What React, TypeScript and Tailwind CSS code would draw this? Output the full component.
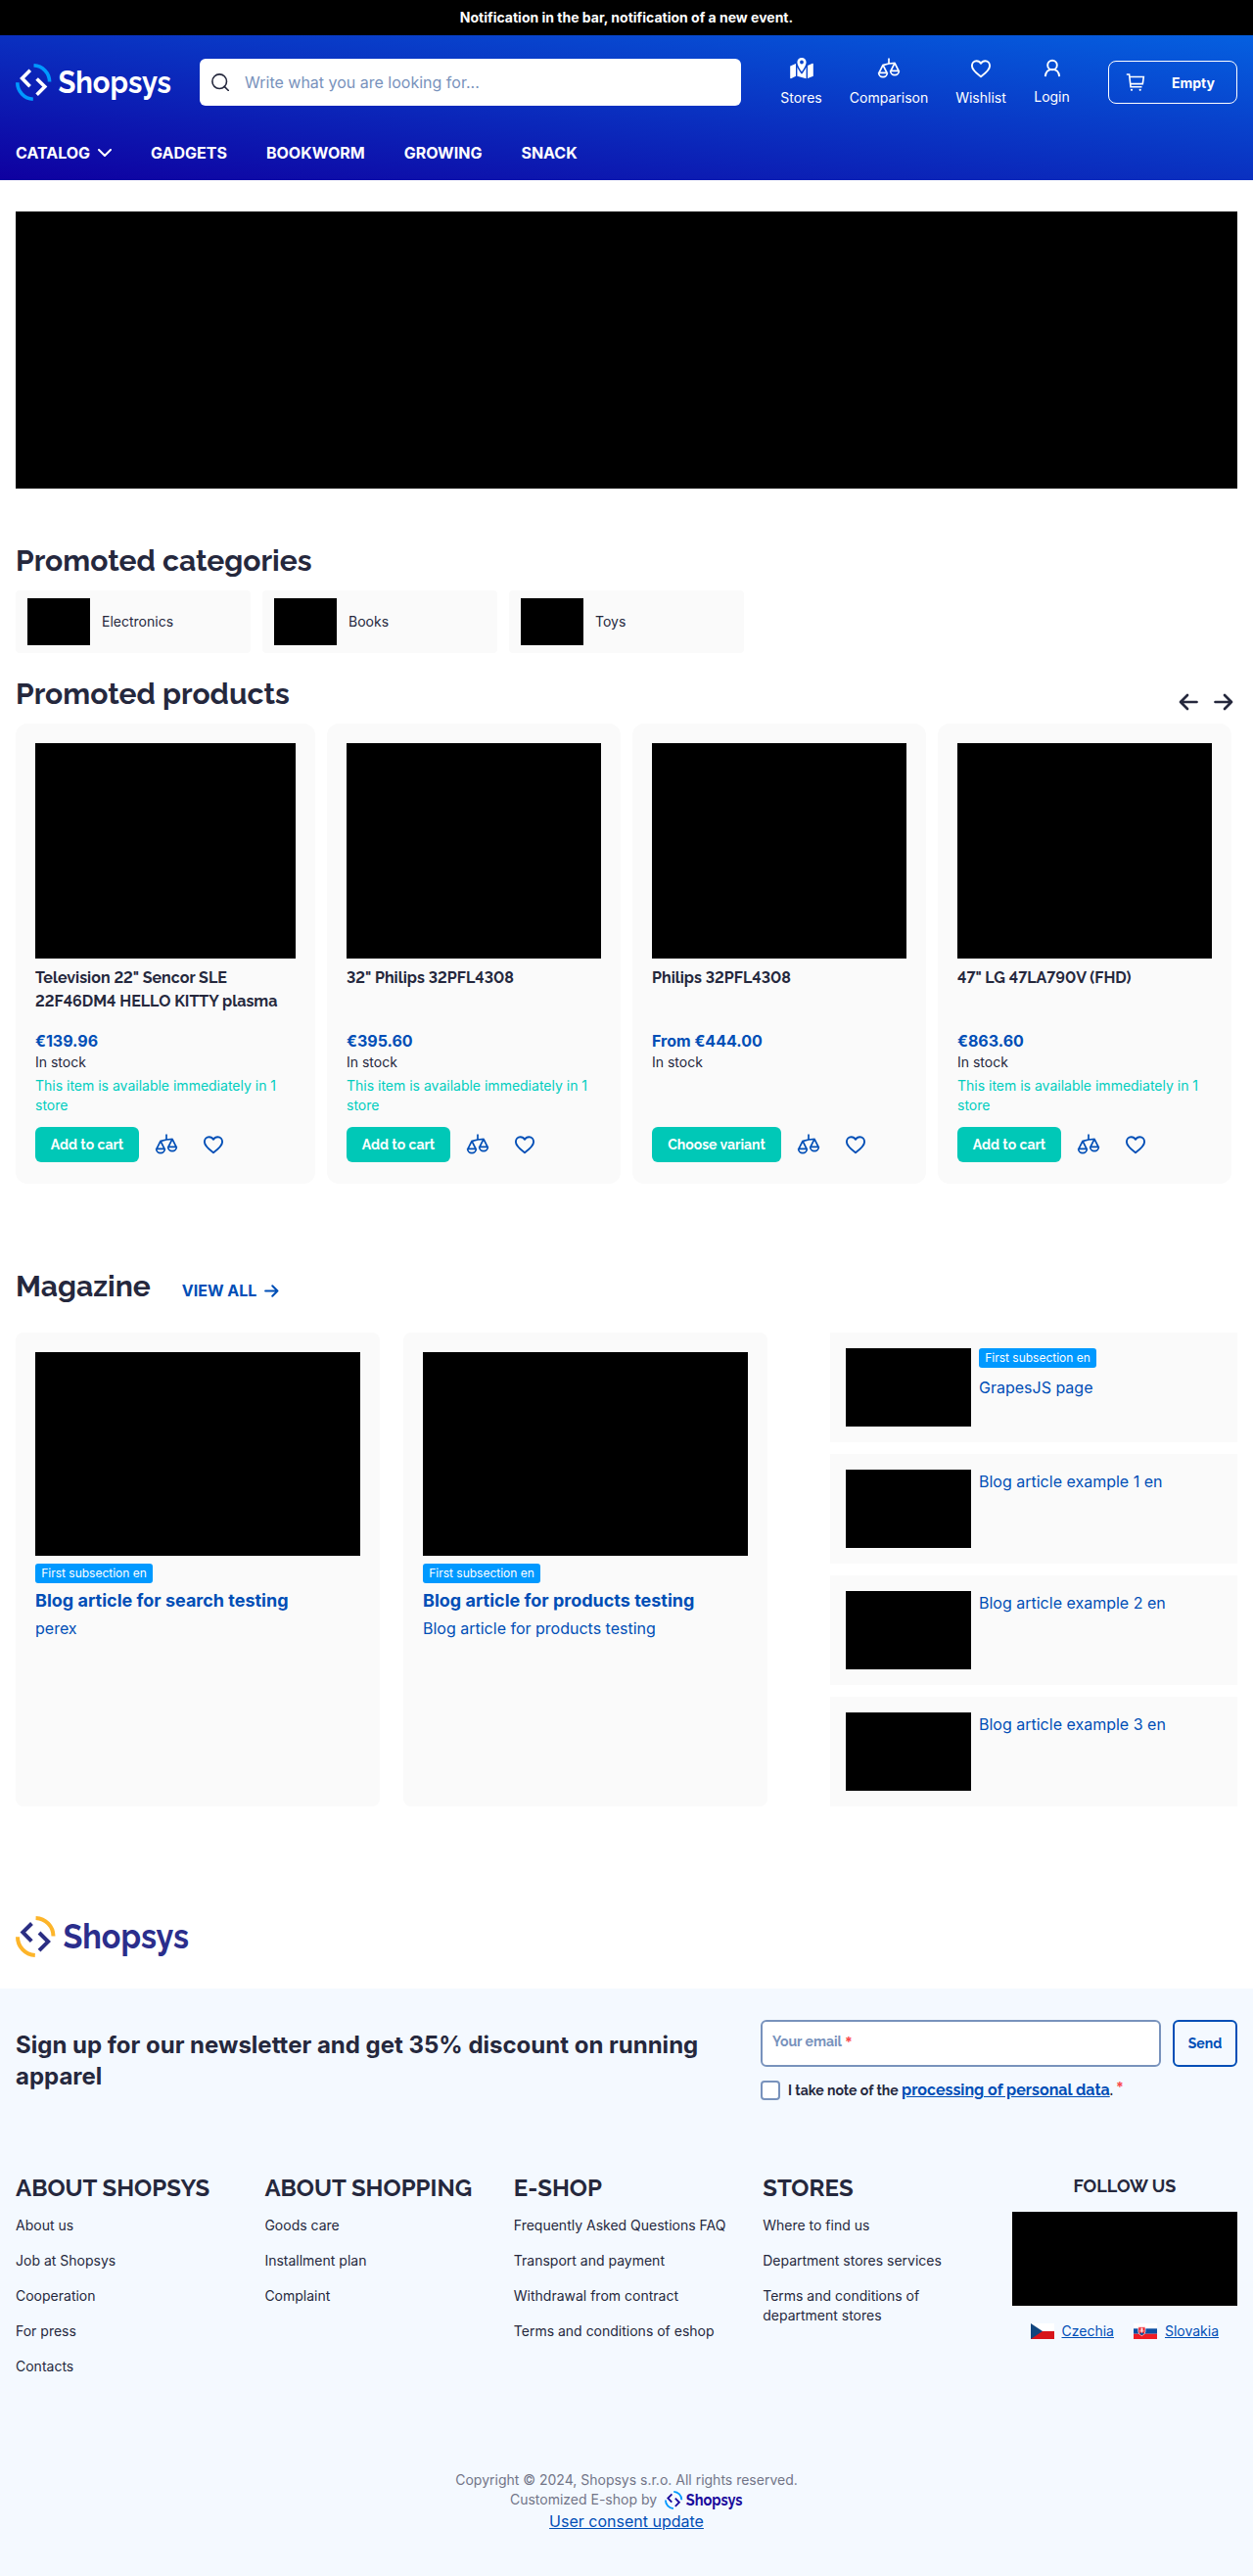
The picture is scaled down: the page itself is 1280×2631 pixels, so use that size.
import React from "react";

const heading = "font-['Raleway','Lato',sans-serif] font-bold lining-nums";

function Logo({ width, height, ring, mark, word }: { width: number; height: number; ring: string; mark: string; word: string }) {
  return (
    <svg width={width} height={height} viewBox="0 0 160 38" fill="none" preserveAspectRatio="none" className="overflow-visible">
      <path d="M18.5 1.8A16.8 16.8 0 0 1 34.6 18.6" stroke={ring} strokeWidth="3.6" />
      <path d="M1.8 19.2A16.8 16.8 0 0 0 17.8 36.2" stroke={ring} strokeWidth="3.6" />
      <path d="M14.8 6.8L6.6 15L14.6 23.2" stroke={mark} strokeWidth="3.6" />
      <path d="M21.6 15.4L29.8 23.6L21.6 31.8" stroke={mark} strokeWidth="3.6" />
      <text x="43.5" y="30" fill={word} fontFamily="Raleway, Lato, sans-serif" fontWeight="700" fontSize="31.5" textLength="115.5" lengthAdjust="spacingAndGlyphs">Shopsys</text>
    </svg>
  );
}

function CompareIcon() {
  return (
    <svg width="24" height="24" viewBox="0 0 24 24" fill="none" stroke="currentColor" strokeWidth="1.7" strokeLinejoin="round" className="shrink-0">
      <path d="M12 1.5V7M5.5 8.6L12 7L18.5 6.4" />
      <path d="M6 8.4L2 16.4M6 8.4L10 16.4M18 6.4L14 14.4M18 6.4L22 14.4" />
      <path d="M1.6 16.4H10.4M13.6 14.4H22.4" />
      <path d="M1.6 16.2A4.4 4.4 0 0 0 10.4 16.2M13.6 14.2A4.4 4.4 0 0 0 22.4 14.2" />
    </svg>
  );
}

function HeartIcon() {
  return (
    <svg width="24" height="24" viewBox="0 0 24 24" fill="none" stroke="currentColor" strokeWidth="1.9" strokeLinejoin="round" className="shrink-0">
      <path d="M12 20.2C8.5 17.6 2.9 13.6 2.9 9.2C2.9 6.3 5 4.2 7.5 4.2C9.4 4.2 11 5 12 6.8C13 5 14.6 4.2 16.5 4.2C19 4.2 21.1 6.3 21.1 9.2C21.1 13.6 15.5 17.6 12 20.2Z" />
    </svg>
  );
}

function StoresIcon() {
  return (
    <svg width="24" height="24" viewBox="0 0 24 24" fill="currentColor" className="shrink-0">
      <path fillRule="evenodd" d="M12 1C9.3 1 7.4 3 7.4 5.5C7.4 9 12 15.4 12 15.4S16.6 9 16.6 5.5C16.6 3 14.7 1 12 1ZM12 3.6A1.9 1.9 0 1 1 12 7.4A1.9 1.9 0 0 1 12 3.6Z" />
      <path d="M0.2 9.4L6 7V19.8L1 22.2Q0.2 22.4 0.2 21.6ZM7.4 10.5C8.4 13 10.4 15.8 12 17.8C13.6 15.8 15.6 13 16.6 10.5V22.3L7.4 19.7ZM18 9L23 6.7Q23.8 6.4 23.8 7.4V19.7L18 22.1Z" />
    </svg>
  );
}

function UserIcon() {
  return (
    <svg width="24" height="24" viewBox="0 0 24 24" fill="none" stroke="currentColor" strokeWidth="1.9" className="shrink-0">
      <circle cx="12" cy="8.5" r="4.8" />
      <path d="M4.8 20.2C5.2 15.8 7.6 12.9 12 12.9S18.8 15.8 19.2 20.2" />
    </svg>
  );
}

function CartIcon() {
  return (
    <svg width="20" height="20" viewBox="0 0 20 20" fill="none" stroke="currentColor" strokeWidth="1.6">
      <path d="M.8 2H3.6L5 14.7H16.5M4 4.5H18.3L17.3 11.6H4.8" />
      <circle cx="6" cy="17.8" r="1.1" fill="currentColor" stroke="none" />
      <circle cx="14.7" cy="17.8" r="1.1" fill="currentColor" stroke="none" />
    </svg>
  );
}

function Arrow({ size, left = false }: { size: number; left?: boolean }) {
  return (
    <svg width={size} height={size} viewBox="0 0 20 20" fill="none" stroke="currentColor" strokeWidth="2.7" strokeLinecap="round" strokeLinejoin="round" className={left ? "rotate-180" : ""}>
      <path d="M1.5 10H18M11 3L18 10L11 17" />
    </svg>
  );
}

const products = [
  { name: ['Television 22" Sencor SLE', "22F46DM4 HELLO KITTY plasma"], price: "€139.96", store: true, wide: true },
  { name: ['32" Philips 32PFL4308'], price: "€395.60", store: true },
  { name: ["Philips 32PFL4308"], price: "From €444.00", variant: true },
  { name: ['47" LG 47LA790V (FHD)'], price: "€863.60", store: true },
];

const columns = [
  { title: "ABOUT SHOPSYS", links: ["About us", "Job at Shopsys", "Cooperation", "For press", "Contacts"] },
  { title: "ABOUT SHOPPING", links: ["Goods care", "Installment plan", "Complaint"] },
  { title: "E-SHOP", links: ["Frequently Asked Questions FAQ", "Transport and payment", "Withdrawal from contract", "Terms and conditions of eshop"] },
  { title: "STORES", links: ["Where to find us", "Department stores services", "Terms and conditions of department stores"] },
];

function Badge() {
  return <span className="flex h-5 w-[120px] items-center justify-center rounded-[3px] bg-[#0099ff] text-[12px] leading-4 text-white">First subsection en</span>;
}

function MenuItem({ icon, label, className }: { icon: React.ReactNode; label: string; className: string }) {
  return (
    <a className={"flex flex-col items-center text-[14px] leading-5 [&>svg]:-mt-[2px] " + className}>
      {icon}
      <span className="whitespace-nowrap">{label}</span>
    </a>
  );
}

export default function App() {
  return (
    <div className="h-[2631px] w-[1280px] bg-white font-['Inter',sans-serif] text-[#25283d]">
      <div className="flex h-9 items-center justify-center bg-black text-[14px] font-bold leading-5 text-white">
        Notification in the bar, notification of a new event.
      </div>

      <header className="h-[148px] bg-[linear-gradient(to_top_right,#0f00a0,#0560e0)] px-4 pt-6 text-white">
        <div className="flex h-12">
          <div className="w-[188px] pt-[5px]">
            <Logo width={160} height={38} ring="#0099ff" mark="#ffffff" word="#ffffff" />
          </div>
          <div className="flex w-[553px] items-center gap-4 rounded-md bg-white pl-3">
            <svg width="18" height="18" viewBox="0 0 18 18" fill="none" stroke="#25283d" strokeWidth="1.6" className="shrink-0">
              <circle cx="8.2" cy="8.2" r="7.3" />
              <path d="M13.2 13.4L17.4 17.5" strokeLinecap="round" />
            </svg>
            <span className="text-[16px] leading-6 text-[#7892bc]">Write what you are looking for...</span>
          </div>
          <MenuItem className="ml-10 w-[43px] gap-2" icon={<StoresIcon />} label="Stores" />
          <MenuItem className="ml-7 w-[80px] gap-2" icon={<CompareIcon />} label="Comparison" />
          <MenuItem className="ml-7 w-[52px] gap-2" icon={<HeartIcon />} label="Wishlist" />
          <MenuItem className="ml-7 w-[37px] gap-[7px]" icon={<UserIcon />} label="Login" />
          <div className="mt-[2px] ml-auto flex h-11 w-[132px] items-center rounded-lg border border-white pl-[17px] text-[14px] font-bold">
            <CartIcon />
            <span className="ml-[27px]">Empty</span>
          </div>
        </div>
        <nav className="mt-9 flex gap-10 text-[16px] font-bold leading-6">
          <span className="flex items-center gap-2">
            CATALOG
            <svg width="14" height="8" viewBox="0 0 14 8" fill="none" stroke="currentColor" strokeWidth="2" strokeLinecap="round" strokeLinejoin="round">
              <path d="M1 1L7 7L13 1" />
            </svg>
          </span>
          <span>GADGETS</span>
          <span>BOOKWORM</span>
          <span>GROWING</span>
          <span>SNACK</span>
        </nav>
      </header>

      <main className="px-4 pt-8">
        <div className="h-[283px] bg-black" />

        <h2 className={heading + " mt-14 text-[30px] leading-9"}>Promoted categories</h2>
        <div className="mt-3 flex gap-3">
          {["Electronics", "Books", "Toys"].map((c) => (
            <div key={c} className="flex h-16 w-60 items-center gap-3 rounded bg-[#fafafa] px-3 text-[14px] leading-5">
              <div className="h-12 w-16 bg-black" />
              {c}
            </div>
          ))}
        </div>

        <div className="mt-6 flex h-12 justify-between">
          <h2 className={heading + " text-[30px] leading-9"}>Promoted products</h2>
          <div className="mt-4 mr-1 flex gap-4">
            <Arrow size={20} left />
            <Arrow size={20} />
          </div>
        </div>
        <div className="flex gap-3">
          {products.map((p) => (
            <article key={p.price} className={"flex h-[470px] flex-col rounded-xl bg-[#fafafa] p-5 " + (p.wide ? "w-[306px]" : "w-[300px]")}>
              <div className="h-[220px] bg-black" />
              <h3 className={heading + " mt-2 h-[60px] text-[16px] leading-6"}>
                {p.name.map((n) => (
                  <span key={n} className="block whitespace-nowrap">{n}</span>
                ))}
              </h3>
              <p className="mt-1 text-[16px] font-bold leading-6 text-[#004eb6]">{p.price}</p>
              <p className="text-[14px] leading-5">In stock</p>
              {p.store && <p className="mt-1 text-[14px] leading-5 text-[#00cdbe]">This item is available immediately in 1 store</p>}
              <div className="mt-auto mb-[2px] flex h-9 items-center gap-6 text-[#004eb6]">
                <button className={heading + " -mr-2 h-9 rounded-md bg-[#00c8b7] text-[14px] leading-5 text-white " + (p.variant ? "w-[132px]" : "w-[106px]")}>
                  {p.variant ? "Choose variant" : "Add to cart"}
                </button>
                <CompareIcon />
                <HeartIcon />
              </div>
            </article>
          ))}
        </div>

        <div className="mt-[87px] flex items-center">
          <h2 className={heading + " text-[30px] leading-9"}>Magazine</h2>
          <a className="mt-2 ml-8 flex items-center gap-2 text-[16px] font-bold leading-6 text-[#004eb6]">
            VIEW ALL <Arrow size={15} />
          </a>
        </div>
        <div className="mt-[29px] flex h-[484px]">
          {[
            ["Blog article for search testing", "perex"],
            ["Blog article for products testing", "Blog article for products testing"],
          ].map(([t, d]) => (
            <article key={t} className="mr-6 w-[372px] rounded-lg bg-[#fafafa] p-5 text-[#004eb6]">
              <div className="mb-2 h-52 bg-black" />
              <Badge />
              <h3 className="mt-1 text-[18px] font-bold leading-7">{t}</h3>
              <p className="mt-[2px] text-[16px] leading-6">{d}</p>
            </article>
          ))}
          <div className="ml-10 flex flex-1 flex-col gap-3">
            {["GrapesJS page", "Blog article example 1 en", "Blog article example 2 en", "Blog article example 3 en"].map((t, i) => (
              <article key={t} className="flex h-28 gap-2 bg-[#fafafa] p-4 text-[16px] leading-6 text-[#004eb6]">
                <div className="h-20 w-32 bg-black" />
                <div className="flex flex-col gap-2">
                  {i === 0 && <Badge />}
                  <span>{t}</span>
                </div>
              </article>
            ))}
          </div>
        </div>
        <div className="mt-28 h-[74px]">
          <Logo width={178} height={42} ring="#fdb52a" mark="#2b2e83" word="#2b2e8c" />
        </div>
      </main>

      <footer className="h-[600px] bg-[#f4f9ff] px-4 pt-8">
        <div className="flex h-[84px]">
          <h2 className="mt-[10px] w-[720px] text-[24px] font-bold leading-8">Sign up for our newsletter and get 35% discount on running apparel</h2>
          <form className={heading + " ml-auto w-[487px] text-[14px]"}>
            <div className="flex gap-3">
              <div className="flex h-12 flex-1 items-center rounded-md border-2 border-[#7892bc] bg-white pb-1 pl-[10px] text-[#7892bc]">
                Your email<span className="ml-[3px] font-['Inter'] text-[#f9484c]">*</span>
              </div>
              <button type="button" className="h-12 w-[66px] rounded-md border-2 border-[#004eb6] text-[#004eb6]">Send</button>
            </div>
            <div className="mt-[14px] flex h-5 items-center gap-2">
              <span className="size-5 rounded-sm border-2 border-[#7892bc] bg-white" />
              <span className="whitespace-nowrap leading-5">
                I take note of the <a className="text-[16px] text-[#004eb6] underline">processing of personal data</a>.
                <sup className="top-[-3px] ml-[3px] font-['Inter'] text-[14px] text-[#f9484c]">*</sup>
              </span>
            </div>
          </form>
        </div>

        <div className="mt-[70px] grid h-[293px] grid-cols-5 gap-6">
          {columns.map((c) => (
            <div key={c.title}>
              <h3 className={heading + " whitespace-nowrap text-[24px] leading-9"}>{c.title}</h3>
              <ul className="mt-[10px] flex flex-col gap-4 text-[14px] leading-5">
                {c.links.map((l) => (
                  <li key={l}>{l}</li>
                ))}
              </ul>
            </div>
          ))}
          <div className="text-center">
            <h3 className={heading + " mt-1 text-[18px] leading-6"}>FOLLOW US</h3>
            <div className="mt-[14px] h-24 bg-black" />
            <div className="mt-4 flex justify-center gap-5 text-[14px] leading-5 text-[#004eb6]">
              <a className="flex items-center gap-2">
                <svg width="24" height="16" viewBox="0 0 24 16">
                  <path fill="#fff" d="M0 0H24V8H0Z" />
                  <path fill="#d7141a" d="M0 8H24V16H0Z" />
                  <path fill="#11457e" d="M0 0L12 8L0 16Z" />
                </svg>
                <span className="underline">Czechia</span>
              </a>
              <a className="flex items-center gap-2">
                <svg width="24" height="16" viewBox="0 0 24 16">
                  <path fill="#fff" d="M0 0H24V6H0Z" />
                  <path fill="#0b4ea2" d="M0 5.3H24V10.7H0Z" />
                  <path fill="#ee1c25" d="M0 10.7H24V16H0Z" />
                  <path fill="#ee1c25" stroke="#fff" strokeWidth="0.7" d="M4.8 3.8H12V8.4Q12 11 8.4 12.6Q4.8 11 4.8 8.4Z" />
                  <path stroke="#fff" strokeWidth="0.9" d="M8.4 4.6V10M6.8 6H10M6.2 7.9H10.6" />
                  <path fill="#0b4ea2" d="M6 10.2Q8.4 8.8 10.8 10.2Q9.8 11.5 8.4 12.1Q7 11.5 6 10.2Z" />
                </svg>
                <span className="underline">Slovakia</span>
              </a>
            </div>
          </div>
        </div>

        <div className="mt-[13px] flex flex-col items-center text-[14px] leading-5 text-[#727588]">
          <p>Copyright © 2024, Shopsys s.r.o. All rights reserved.</p>
          <p className="flex items-center gap-2">
            Customized E-shop by
            <Logo width={80} height={19} ring="#0099ff" mark="#1a0a9c" word="#1a0a9c" />
          </p>
          <a className="text-[16px] leading-6 text-[#004eb6] underline">User consent update</a>
        </div>
      </footer>
    </div>
  );
}
